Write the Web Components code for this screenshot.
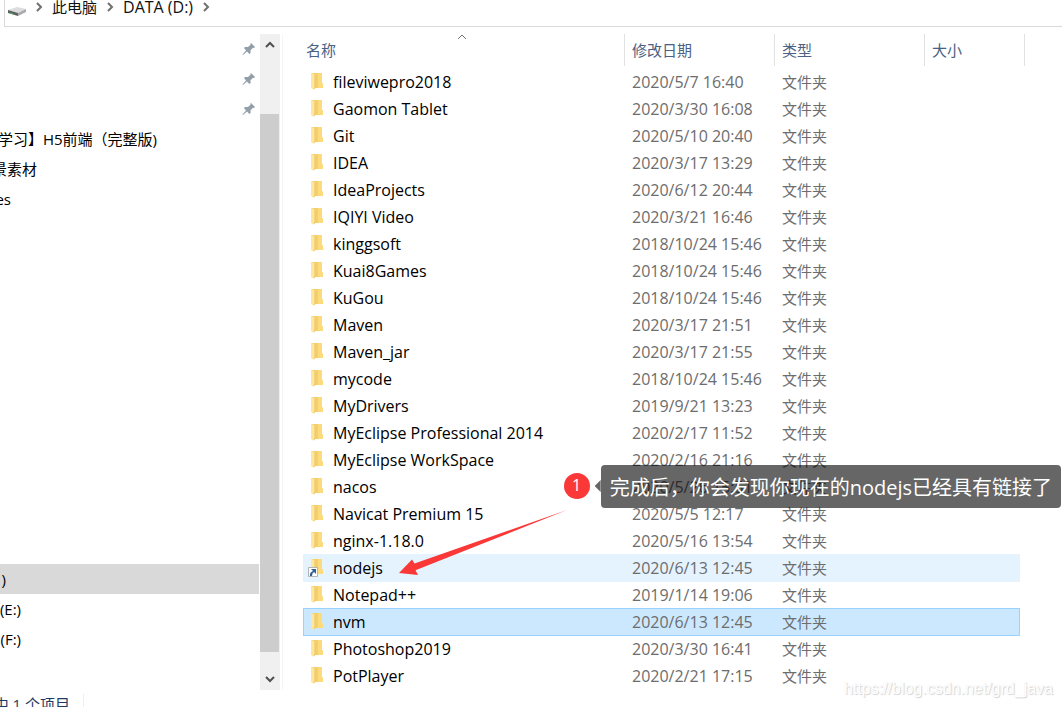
<!DOCTYPE html>
<html lang="zh-CN">
<head>
<meta charset="utf-8">
<title>DATA (D:)</title>
<style>
  html, body { height: 100%; }
  body { margin: 0; overflow: hidden; background: #fff; color: #000; font: 15px/20px "Open Sans", "Noto Sans CJK SC", sans-serif; }
</style>
</head>
<body>
<file-explorer></file-explorer>
<script>
const define = (name, html, setup) => customElements.define(name, class extends HTMLElement {
  connectedCallback() {
    if (this.shadowRoot) return;
    const root = this.attachShadow({ mode: 'open' });
    const t = document.createElement('template');
    t.innerHTML = html;
    root.append(t.content.cloneNode(true));
    if (setup) setup(this, root);
  }
});

define('folder-icon', `
<style>
  :host { display: block; width: 20px; height: 20px; }
  svg { display: block; }
  .link { display: none; }
  :host([link]) .link { display: block; }
</style>
<svg width="20" height="20" viewBox="0 0 20 20" aria-hidden="true">
  <path d="M6 2h10v10l1 1v4H6z" fill="#f5d06a"/>
  <path d="M12 2h4v10l1 1v4h-5z" fill="#fbdb7e"/>
  <path d="M5 2h1l3 2v12l-1 3-3-2z" fill="#fde6a0"/>
  <path d="M9 4v12l-1 2" fill="none" stroke="#edc75e"/>
  <g class="link">
    <path d="M2.500 10.500h9v9h-9z" fill="#fff" stroke="#b4b4b4"/>
    <path d="M5 12h5v5l-2-2q-2 1-2 4H4q-1-3 3-5z" fill="#2d6298"/>
  </g>
</svg>`);

define('pin-icon', `
<style>:host { display: block; width: 14px; height: 14px; } svg { display: block; }</style>
<svg width="14" height="14" viewBox="0 0 14 14" aria-hidden="true">
  <path d="M9 1l4 4-1 1-1-.2-2.500 2.500.1 2.700-1.100 1L5 9.500 1 13l-.5-.5L4 8.500 2 6l1-1 3 .1 2.500-2.300V1.500z" fill="#929ea8"/>
</svg>`);

define('chevron-icon', `
<style>
  :host { display: inline-block; width: 10px; height: 10px; color: #707070; }
  :host([dir="up"]) { transform: rotate(-90deg); }
  :host([dir="down"]) { transform: rotate(90deg); }
  svg { display: block; }
  path { stroke-width: var(--w, 2); }
</style>
<svg width="10" height="10" viewBox="0 0 10 10" aria-hidden="true"><path d="M3 1l4 4-4 4" fill="none" stroke="currentColor"/></svg>`);

define('address-bar', `
<style>
  :host { display: flex; height: 26px; margin-left: 4px; border: solid #d9d9d9; border-width: 0 0 1px 1px; box-sizing: content-box; }
  nav { display: flex; align-items: flex-start; }
  .drive { margin: 5px 6px 0 3px; }
  a { color: #111; text-decoration: none; line-height: 14px; margin: 0 8px; }
  .latin { font-size: 16px; }
  chevron-icon { margin-top: 2px; }
</style>
<nav aria-label="路径">
  <svg class="drive" width="20" height="12" viewBox="0 0 20 12" aria-hidden="true">
    <path d="M0 5l9-3 9 2-8 4z" fill="#dcdcde"/>
    <path d="M10 8l8-4v3l-8 4z" fill="#a9a9ae"/>
    <path d="M0 5l10 3v3L0 8z" fill="#5c625e"/>
    <path d="M2 8l3 1" stroke="#57a865"/>
  </svg>
  <chevron-icon></chevron-icon><a href="#pc">此电脑</a>
  <chevron-icon></chevron-icon><a class="latin" href="#d">DATA (D:)</a>
  <chevron-icon></chevron-icon>
</nav>`);

define('side-item', `
<style>
  :host { display: block; height: 30px; }
  a { display: flex; align-items: center; height: 100%; margin-right: 1px; padding-right: 3px; color: #000; text-decoration: none; white-space: nowrap; }
  span { flex: 1; min-width: 0; }
  pin-icon { display: none; }
  :host([pinned]) pin-icon { display: block; }
  :host([current]) a { background: #d9d9d9; }
</style>
<a href="#folder"><span><slot></slot></span><pin-icon></pin-icon></a>`);

define('side-pane', `
<style>
  :host { display: flex; width: 282px; min-height: 0; border-right: 1px solid #f5f5f5; }
  nav { flex: 1; min-width: 0; display: flex; flex-direction: column; overflow: hidden; }
  .gap { flex: 1; }
  nav::after { content: ""; height: 36px; flex: none; }
  .bar { width: 20px; margin-right: 2px; background: #f0f0f0; display: flex; flex-direction: column; }
  button { border: 0; padding: 0 1px 0 0; background: none; height: 22px; display: grid; place-items: center; }
  chevron-icon { color: #505050; }
  .track { flex: 1; padding: 58px 1px 16px 0; display: flex; }
  .thumb { flex: 1; background: #cdcdcd; }
  .clip { display: inline-flex; justify-content: flex-end; overflow: hidden; }
  .c1 { width: 157px; } .c2 { width: 37px; } .c3 { width: 11px; } .c4 { width: 6px; } .c5 { width: 21px; }
</style>
<nav aria-label="导航窗格">
  <side-item pinned></side-item><side-item pinned></side-item><side-item pinned></side-item>
  <side-item><span class="clip c1">学习】H5前端（完整版)</span></side-item>
  <side-item><span class="clip c2">景素材</span></side-item>
  <side-item><span class="clip c3">es</span></side-item>
  <div class="gap"></div>
  <side-item current><span class="clip c4">)</span></side-item>
  <side-item><span class="clip c5">(E:)</span></side-item>
  <side-item><span class="clip c5">(F:)</span></side-item>
</nav>
<div class="bar">
  <button aria-label="向上滚动"><chevron-icon dir="up"></chevron-icon></button>
  <div class="track"><div class="thumb"></div></div>
  <button aria-label="向下滚动"><chevron-icon dir="down"></chevron-icon></button>
</div>`);

const FILES = [
  ['fileviwepro2018', '2020/5/7 16:40'], ['Gaomon Tablet', '2020/3/30 16:08'], ['Git', '2020/5/10 20:40'],
  ['IDEA', '2020/3/17 13:29'], ['IdeaProjects', '2020/6/12 20:44'], ['IQIYI Video', '2020/3/21 16:46'],
  ['kinggsoft', '2018/10/24 15:46'], ['Kuai8Games', '2018/10/24 15:46'], ['KuGou', '2018/10/24 15:46'],
  ['Maven', '2020/3/17 21:51'], ['Maven_jar', '2020/3/17 21:55'], ['mycode', '2018/10/24 15:46'],
  ['MyDrivers', '2019/9/21 13:23'], ['MyEclipse Professional 2014', '2020/2/17 11:52'],
  ['MyEclipse WorkSpace', '2020/2/16 21:16'], ['nacos', '2020/5/26 15:51'], ['Navicat Premium 15', '2020/5/5 12:17'],
  ['nginx-1.18.0', '2020/5/16 13:54'], ['nodejs', '2020/6/13 12:45', 'hover'], ['Notepad++', '2019/1/14 19:06'],
  ['nvm', '2020/6/13 12:45', 'selected'], ['Photoshop2019', '2020/3/30 16:41'], ['PotPlayer', '2020/2/21 17:15']
];

define('file-list', `
<style>
  :host { display: block; }
  table, thead, tbody { display: block; }
  tr { display: grid; grid-template-columns: minmax(0,1fr) 150px 150px 100px; }
  th { position: relative; height: 32px; box-sizing: border-box; padding: 0 7px; border-right: 1px solid #e2e2e2; text-align: left; font-weight: 400; line-height: 32px; color: #4a6184; }
  th:first-child { padding-left: 3px; }
  th chevron-icon { position: absolute; top: -2px; left: calc(50% - 7px); --w: 1; }
  tbody { padding-top: 2px; margin-right: 5px; }
  tbody tr { grid-template-columns: minmax(0,1fr) 150px 150px 96px; height: 27px; }
  td { padding: 0 8px; line-height: 28px; color: #6d6d6d; white-space: nowrap; }
  td.name { display: flex; padding: 0 0 0 3px; gap: 7px; color: #000; }
  td.name, td.date { font-size: 16px; line-height: 29px; }
  folder-icon { margin-top: 3px; }
  tr.hover { background: #e5f3ff; box-shadow: 0 1px #e5f3ff; }
  tr.selected { background: #cce8ff; box-shadow: inset 1px 1px #99d1ff, inset -1px 0 #99d1ff, 0 1px #99d1ff; }
</style>
<table>
  <thead><tr><th scope="col">名称<chevron-icon dir="up"></chevron-icon></th><th scope="col">修改日期</th><th scope="col">类型</th><th scope="col">大小</th></tr></thead>
  <tbody></tbody>
</table>`, (host, root) => {
  root.querySelector('tbody').innerHTML = FILES.map(([name, date, state = '']) =>
    `<tr class="${state}"><td class="name"><folder-icon${name === 'nodejs' ? ' link' : ''}></folder-icon><span>${name}</span></td><td class="date">${date}</td><td>文件夹</td><td></td></tr>`).join('');
});

define('callout-note', `
<style>
  :host { position: absolute; right: 1px; top: 431px; display: flex; align-items: flex-start; color: #fff; white-space: nowrap; }
  .badge { width: 26px; height: 26px; margin: 8px 5px 0 0; border-radius: 50%; background: #fa3838; text-align: center; font-size: 16px; line-height: 24px; }
  .tip { width: 6px; height: 12px; margin-top: 15px; background: rgba(0,0,0,.6); clip-path: polygon(0 50%, 100% 0, 100% 100%); }
  .text { height: 43px; padding: 0 9px; border-radius: 4px; background: rgba(0,0,0,.6); font-size: 20px; line-height: 45px; }
  svg { position: absolute; left: -166px; top: 44px; }
</style>
<div class="badge">1</div><div class="tip"></div><div class="text"><slot></slot></div>
<svg width="170" height="68" viewBox="398 509 170 68" aria-hidden="true"><path d="M399 573L412 559.500L414.500 563.500L567 510L415.500 570.300L418 575z" fill="#fa3838"/></svg>`);

define('water-mark', `
<style>:host { position: absolute; right: 9px; bottom: 9px; font: 16px/18px "Liberation Sans", sans-serif; color: #fff; text-shadow: 1px 1px 1px #d2d2d2, 0 0 1px #e6e6e6; }</style>
<slot></slot>`);

define('status-bar', `
<style>
  :host { display: flex; height: 17px; overflow: hidden; color: #1f3a63; }
  div { display: flex; justify-content: flex-end; width: 70px; height: 24px; margin-top: 4px; overflow: hidden; white-space: nowrap; }
  i { width: 1px; height: 17px; margin: 4px 0 0 13px; background: #eee; }
</style>
<div>中 1 个项目</div><i></i>`);

define('file-explorer', `
<style>
  :host { display: flex; flex-direction: column; height: 100vh; position: relative; }
  .body { flex: 1; min-height: 0; display: flex; padding-top: 7px; }
  main { position: relative; flex: 1; min-width: 0; padding: 0 37px 0 20px; }
</style>
<address-bar></address-bar>
<div class="body">
  <side-pane></side-pane>
  <main><file-list></file-list><callout-note>完成后，你会发现你现在的nodejs已经具有链接了</callout-note></main>
</div>
<status-bar></status-bar>
<water-mark>https://blog.csdn.net/grd_java</water-mark>`);
</script>
</body>
</html>
